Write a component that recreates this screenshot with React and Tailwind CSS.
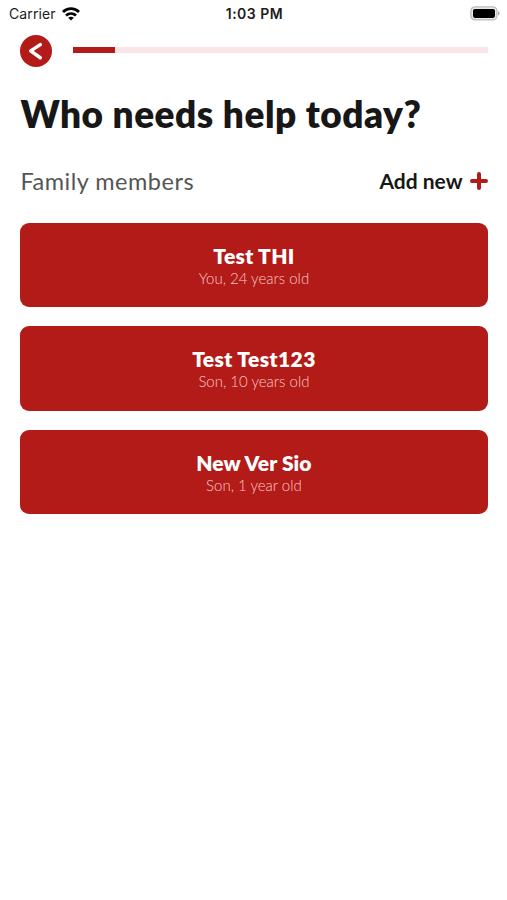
import React from 'react';

const members = [
  { name: 'Test THI', info: 'You, 24 years old', nameClass: 'tracking-[0.3px]', infoClass: 'tracking-[0px]' },
  { name: 'Test Test123', info: 'Son, 10 years old', nameClass: 'tracking-[0.4px]', infoClass: 'tracking-[0px]' },
  { name: 'New Ver Sio', info: 'Son, 1 year old', nameClass: 'tracking-[0.1px]', infoClass: 'tracking-[0px]' },
];

const StatusBar = () => (
  <div className="grid h-[27px] grid-cols-3 items-center pl-[9px] pr-[7px] font-['Inter',sans-serif] text-[14px] text-[#1c1c1c]">
    <div className="flex items-center gap-[6px]">
      <span className="tracking-[0.1px]">Carrier</span>
      <svg width="18" height="14" viewBox="0 0 18 14" fill="none" stroke="#000" strokeWidth="2.8">
        <path d="M1 5C5.5 0.6 12.5 0.6 17 5" />
        <path d="M4 8.5C6.9 5.9 11.1 5.9 14 8.5" />
        <path d="M9 13.6L6.2 10.8C7.8 9.3 10.2 9.3 11.8 10.8Z" fill="#000" stroke="none" />
      </svg>
    </div>
    <span className="text-center font-semibold tracking-[0.5px]">1:03 PM</span>
    <svg className="justify-self-end" width="30" height="15" viewBox="0 0 30 15">
      <rect x="0.9" y="0.9" width="26" height="13" rx="4" fill="#e8e8e8" stroke="#bcbcbc" strokeWidth="1.3" />
      <rect x="3" y="2.9" width="22" height="9" rx="1.8" fill="#000" />
      <path d="M28 5.3C30 6 30 8.8 28 9.5Z" fill="#a8a8a8" />
    </svg>
  </div>
);

const ProgressHeader = () => (
  <div className="flex h-[47px] items-center gap-[20.6px]">
    <button className="flex size-8 shrink-0 items-center justify-center rounded-full bg-[#b31b18]" aria-label="Back">
      <svg width="32" height="32" viewBox="0 0 32 32" fill="none" stroke="#fff" strokeWidth="3.5" strokeLinecap="round" strokeLinejoin="round">
        <path d="M20.3 9.6L10.7 15.9L20.3 22.7" />
      </svg>
    </button>
    <div className="mb-px h-[6px] flex-1 bg-[#f9e5e8]">
      <div className="h-full w-[42px] bg-[#b31b18]" />
    </div>
  </div>
);

const MemberCard = ({ name, info, nameClass, infoClass }) => (
  <button className="flex h-[84.5px] w-full flex-col items-center justify-center rounded-[9px] bg-[#b31b18] pt-px text-white">
    <span className={`text-[21px] leading-[25px] font-extrabold ${nameClass}`}>{name}</span>
    <span className={`text-[15px] leading-[20px] font-light text-[#f5c9c3] ${infoClass}`}>{info}</span>
  </button>
);

const App = () => (
  <div className="h-[900px] w-[507px] overflow-hidden bg-white font-['Lato',sans-serif]">
    <StatusBar />
    <main className="pr-[19.5px] pl-[20.4px]">
      <ProgressHeader />
      <h1 className="mt-[18px] text-[37px] leading-[44px] font-extrabold tracking-[0.5px] whitespace-nowrap text-[#171717]">
        Who needs help today?
      </h1>
      <div className="mt-[29px] flex h-[32px] items-center justify-between">
        <h2 className="pt-[2px] text-[23.5px] tracking-[0.5px] text-[#555]">Family members</h2>
        <button className="flex items-center gap-[7px] text-[21px] font-bold text-[#171717]">
          Add new
          <svg width="18" height="18" viewBox="0 0 18 18" stroke="#b31b18" strokeWidth="4" strokeLinecap="round">
            <path d="M9 2V16M2 9H16" />
          </svg>
        </button>
      </div>
      <div className="mt-[25.5px] flex flex-col gap-[19px]">
        {members.map((member) => (
          <MemberCard key={member.name} {...member} />
        ))}
      </div>
    </main>
  </div>
);

export default App;
